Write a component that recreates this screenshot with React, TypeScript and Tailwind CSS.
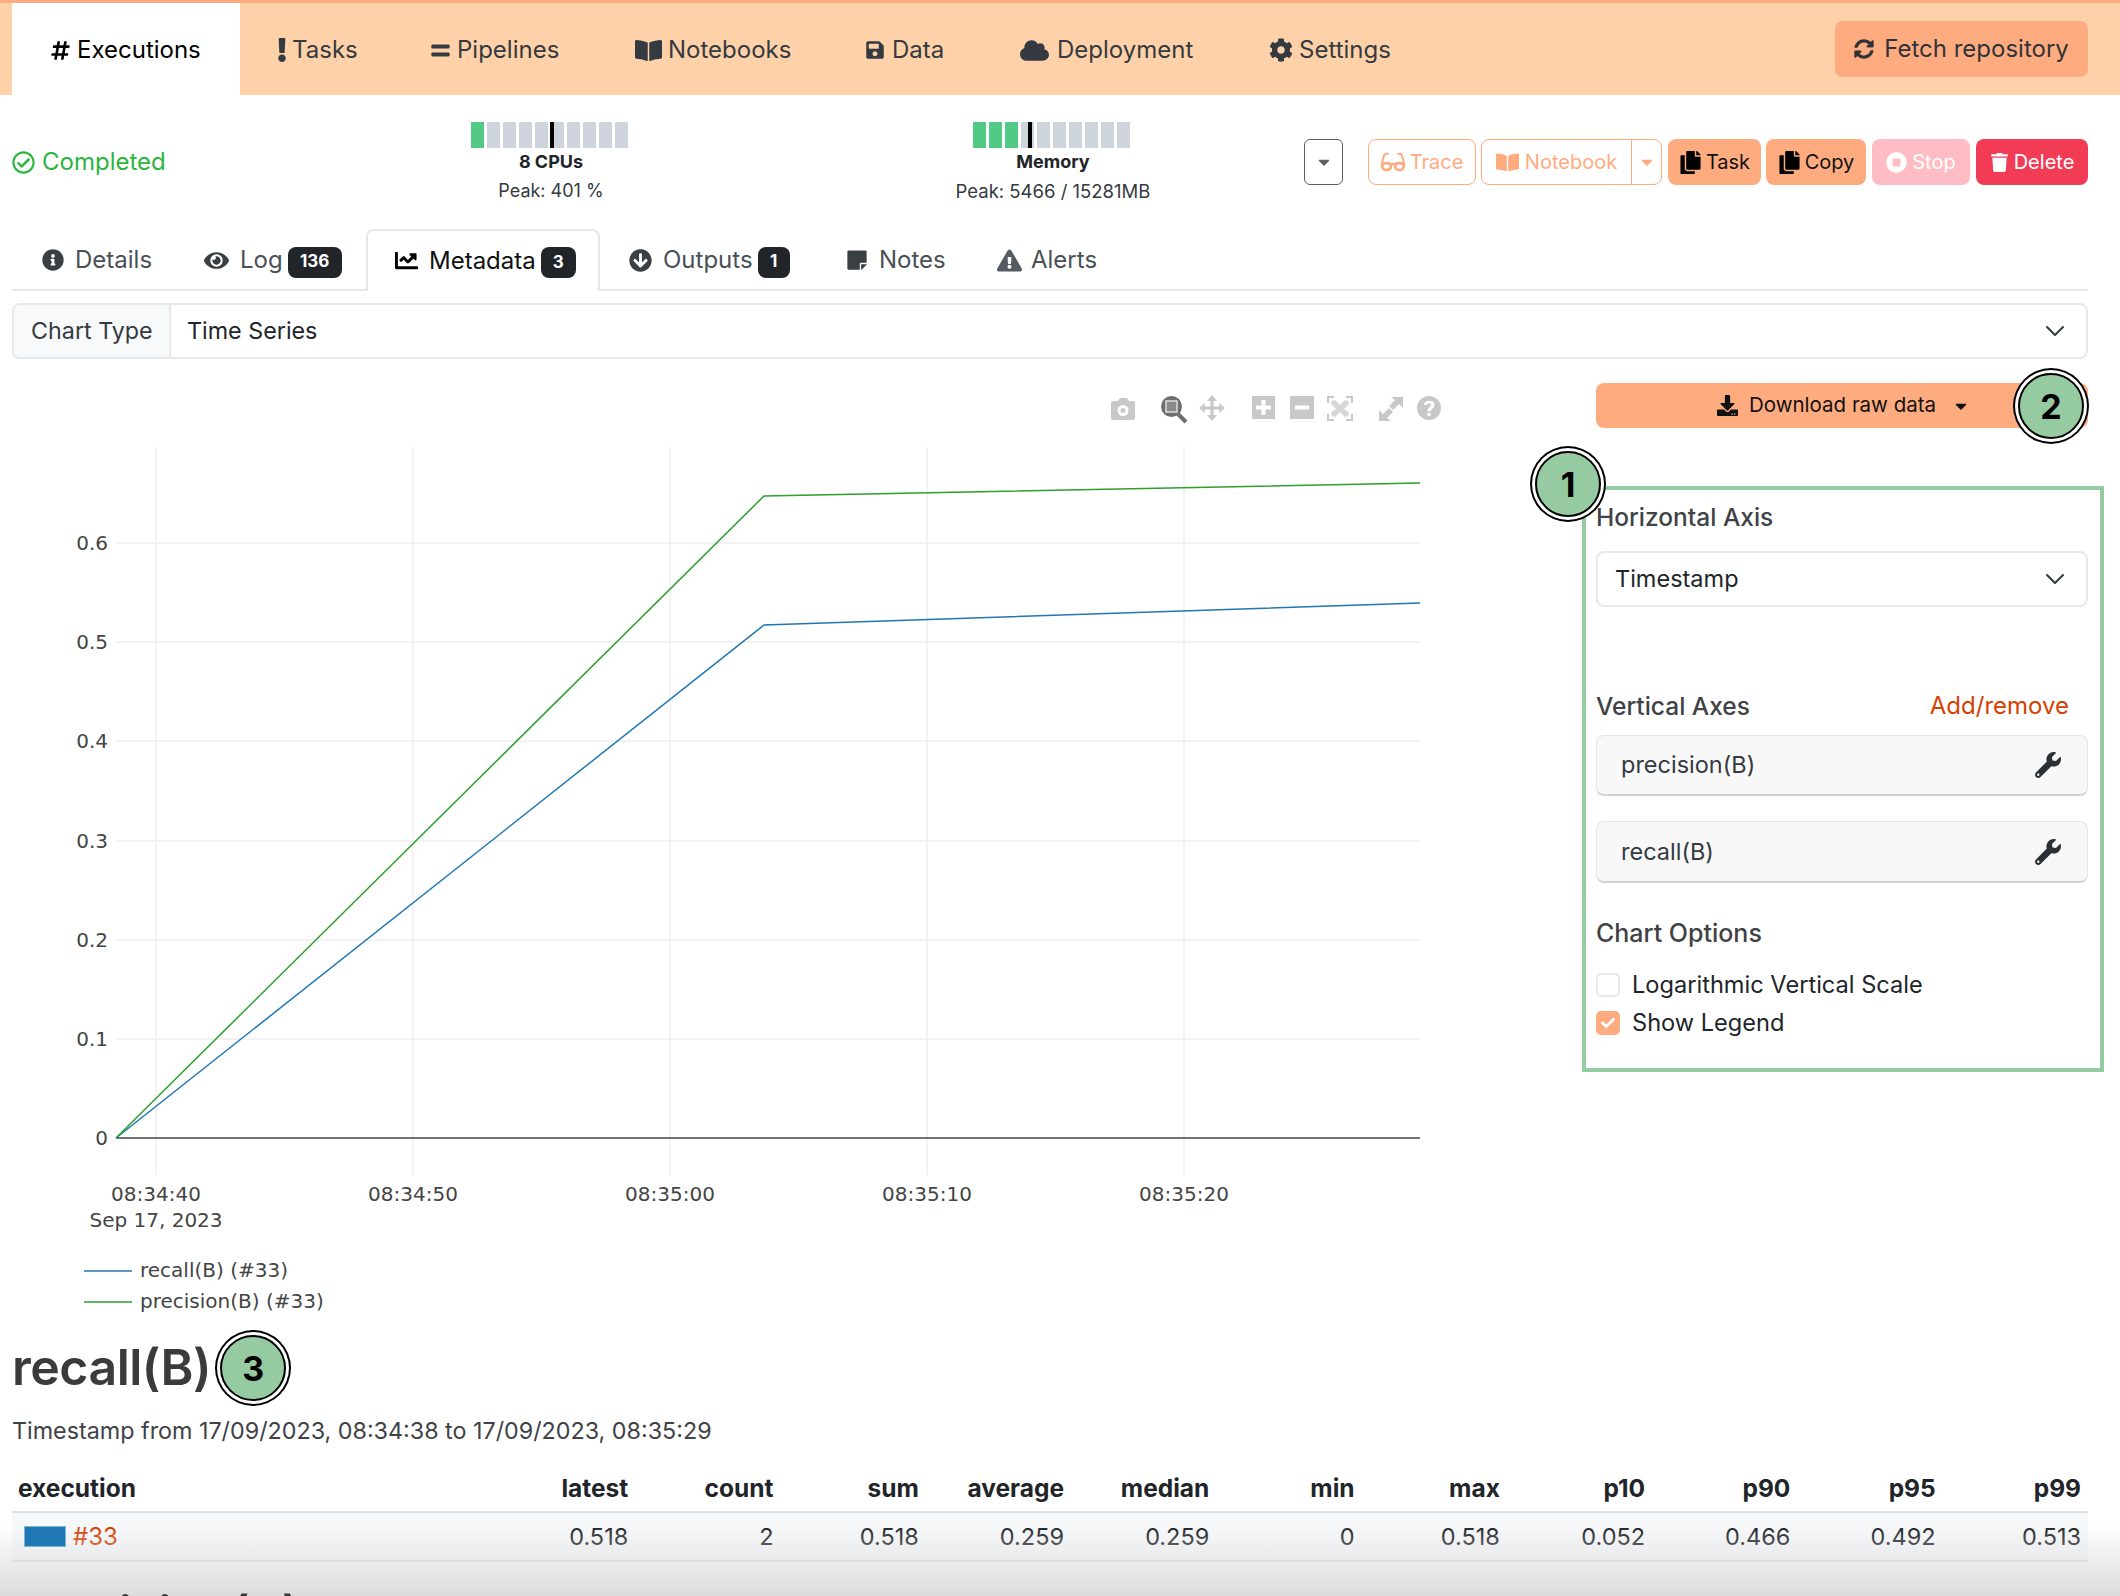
import React from "react";
import {
  FaHashtag, FaExclamation, FaEquals, FaBookOpen, FaSave, FaCloud, FaCog, FaSyncAlt, FaRegCheckCircle,
  FaInfoCircle, FaEye, FaChartLine, FaArrowCircleDown, FaStickyNote, FaExclamationTriangle, FaGlasses,
  FaCopy, FaStopCircle, FaTrash, FaDownload, FaWrench, FaCaretDown, FaCheck,
} from "react-icons/fa";
import { ChevronDown } from "lucide-react";

const navItems = [
  { label: "Tasks", icon: <FaExclamation className="text-[24px] -mr-[2px]" />, w: "w-[152px]", gap: "gap-0", pl: "pl-[30px]" },
  { label: "Pipelines", icon: <FaEquals className="text-[21px]" />, w: "w-[204px]", gap: "gap-[6px]", pl: "pl-[38px]" },
  { label: "Notebooks", icon: <FaBookOpen className="text-[27px]" />, w: "w-[230px]", gap: "gap-[6px]", pl: "pl-[39px]" },
  { label: "Data", icon: <FaSave className="text-[20px]" />, w: "w-[157px]", gap: "gap-[7px]", pl: "pl-[39px]" },
  { label: "Deployment", icon: <FaCloud className="text-[29px]" />, w: "w-[248px]", gap: "gap-[8px]", pl: "pl-[37px]" },
  { label: "Settings", icon: <FaCog className="text-[24px]" />, w: "w-[200px]", gap: "gap-[6px]", pl: "pl-[38px]" },
];

const head = ["latest", "count", "sum", "average", "median", "min", "max", "p10", "p90", "p95", "p99"];
const vals = ["0.518", "2", "0.518", "0.259", "0.259", "0", "0.518", "0.052", "0.466", "0.492", "0.513"];

function Meter({ green, marker }: { green: number; marker: string }) {
  return (
    <div className="relative -ml-[4px] flex gap-[3px] h-[26px]">
      {Array.from({ length: 10 }).map((_, i) => (
        <div key={i} className={i < green ? "w-[13px] bg-[#53c986]" : "w-[13px] bg-[#cdd4dc]"} />
      ))}
      <div className={`absolute top-0 h-full w-[4px] bg-black ${marker}`} />
    </div>
  );
}

function Badge({ n, w }: { n: string; w: string }) {
  return (
    <span className={`-ml-[6px] translate-y-[2px] h-[31px] ${w} rounded-lg bg-[#212529] text-white text-[17px] font-bold flex items-center justify-center`}>{n}</span>
  );
}

function Callout({ n, pos }: { n: string; pos: string }) {
  return (
    <div className={`absolute z-10 w-[66px] h-[66px] rounded-full border-2 border-black bg-[#96cba1] shadow-[0_0_0_3px_#fff,0_0_0_5px_#000] flex items-center justify-center text-[34px] font-bold text-black ${pos}`}>
      {n}
    </div>
  );
}

function MetricBox({ label, mt, h }: { label: string; mt: string; h: string }) {
  return (
    <div className={`${mt} ${h} flex items-center justify-between pl-[24px] pr-[26px] rounded-lg bg-[#f8f8f8] border border-[#e3e5e8] border-b-2 border-b-[#cfd2d6] text-[23.5px] text-[#343a40]`}>
      <span>{label}</span>
      <FaWrench className="text-[26px] text-[#2b3035]" />
    </div>
  );
}

function Chart() {
  const xs = [156, 413, 670, 927, 1184];
  const xl = ["08:34:40", "08:34:50", "08:35:00", "08:35:10", "08:35:20"];
  const ys = [
    [1039, "0.1"], [940, "0.2"], [841, "0.3"], [741, "0.4"], [642, "0.5"], [543, "0.6"],
  ] as [number, string][];
  const t = { fontFamily: "'DejaVu Sans', sans-serif", fontSize: 20, fill: "#444" };
  const ic = "#c8c8c8";
  return (
    <svg viewBox="12 359 1570 961" className="w-[1570px] h-[961px] shrink-0">
      {/* modebar */}
      <g fill={ic}>
        <path fillRule="evenodd" d="M1113 401h5l2-3h7l2 3h4a2 2 0 0 1 2 2v15a2 2 0 0 1-2 2h-20a2 2 0 0 1-2-2v-15a2 2 0 0 1 2-2Zm10 4a5.500 5.500 0 1 0 0 11 5.500 5.500 0 0 0 0-11Zm0 3a2.500 2.500 0 1 1 0 5 2.500 2.500 0 0 1 0-5Z" />
        <path d="M1212 395l5 6h-3.500v5.500h5.500v-3.500l6 5-6 5v-3.500h-5.500v5.500h3.500l-5 6-5-6h3.500v-5.500h-5.500v3.500l-6-5 6-5v3.500h5.500v-5.500h-3.500Z" />
        <path fillRule="evenodd" d="M1252 396h23v23h-23Zm9.500 4v5.500h-5.500v4h5.500v5.500h4v-5.500h5.500v-4h-5.500v-5.500Z" />
        <path fillRule="evenodd" d="M1290 396h24v23h-24Zm5 9.500v4h14v-4Z" />
        <path d="M1327 396h7v2h-5v5h-2Zm19 0h7v7h-2v-5h-5ZM1327 414h2v5h5v2h-7Zm24 0h2v7h-7v-2h5Z" />
        <path d="M1332 401l3-1 5 5 5-5 3 1 1 3-5 4.500 5 4.500-1 3-3 1-5-5-5 5-3-1-1-3 5-4.500-5-4.500Z" opacity="0.75" />
        <path d="M1403 397v11l-4-4-6 6-4-4 6-6-4-3ZM1379 421v-11l4 4 6-6 4 4-6 6 4 3Z" />
        <path fillRule="evenodd" d="M1429 396a12 12 0 1 1 0 24 12 12 0 0 1 0-24Zm-5 9h3c0-2 4-2 4 0 0 1.500-3.500 2.500-3.500 5.500v1h3c0-2.500 4-3 4-7 0-5-10.500-5-10.500.5Zm3.500 8v3h3v-3Z" />
      </g>
      <circle cx="1171.500" cy="406.500" r="10.500" fill="#6f6f6f" />
      <path d="M1178 414l8 8" stroke="#6f6f6f" strokeWidth="4" />
      <rect x="1166" y="401" width="11" height="11" fill="#8a8a8a" stroke="#dddddd" strokeWidth="1.500" />

      {/* grid */}
      {xs.map((x) => (
        <line key={x} x1={x} x2={x} y1={447} y2={1175} stroke="#eeeeee" strokeWidth="1.400" />
      ))}
      {ys.map(([y]) => (
        <line key={y} x1={116} x2={1420} y1={y} y2={y} stroke="#eeeeee" strokeWidth="1.400" />
      ))}
      <line x1={116} x2={1420} y1={1138} y2={1138} stroke="#444" strokeWidth="1.400" />
      <polyline points="116,1138 764,625 1420,603" fill="none" stroke="#1f77b4" strokeWidth="1.500" />
      <polyline points="116,1138 764,496 1420,483" fill="none" stroke="#2ca02c" strokeWidth="1.500" />

      {/* labels */}
      {ys.map(([y, l]) => (
        <text key={l} x={108} y={y + 6.500} textAnchor="end" {...t}>{l}</text>
      ))}
      <text x={108} y={1144.500} textAnchor="end" {...t}>0</text>
      {xs.map((x, i) => (
        <text key={x} x={x} y={1201} textAnchor="middle" {...t}>{xl[i]}</text>
      ))}
      <text x={156} y={1227} textAnchor="middle" {...t}>Sep 17, 2023</text>

      {/* legend */}
      <line x1={84} x2={132} y1={1271} y2={1271} stroke="#1f77b4" strokeWidth="1.500" />
      <text x={140} y={1277} {...t}>recall(B) (#33)</text>
      <line x1={84} x2={132} y1={1302} y2={1302} stroke="#2ca02c" strokeWidth="1.500" />
      <text x={140} y={1308} {...t}>precision(B) (#33)</text>
    </svg>
  );
}

export default function App() {
  return (
    <div className="relative w-[2120px] h-[1596px] overflow-hidden bg-white font-['Inter','Liberation_Sans',sans-serif] text-[#212529]">
      {/* top nav */}
      <nav className="h-[95px] border-t-[3px] border-[#ffab80] bg-[#ffd1a8] pl-3 pr-8 flex items-stretch text-[24px] text-[#343a40]">
        <div className="w-[228px] bg-white pl-[38px] pt-[2px] flex items-center gap-[6px] text-black">
          <FaHashtag className="text-[21px]" />
          <span>Executions</span>
        </div>
        {navItems.map((n) => (
          <div key={n.label} className={`${n.w} ${n.pl} ${n.gap} pt-[2px] flex items-center`}>
            {n.icon}
            <span>{n.label}</span>
          </div>
        ))}
        <div className="ml-auto self-center h-[56px] w-[253px] rounded-lg bg-[#ffab80] flex items-center justify-center gap-[10px] text-[#2f3337]">
          <FaSyncAlt className="text-[20px]" />
          <span>Fetch repository</span>
        </div>
      </nav>

      {/* status row */}
      <div className="h-[134px] pl-3 pr-8 flex items-center">
        <div className="w-[389px] flex items-center gap-[7px] text-[24px] text-[#2bb53d]">
          <FaRegCheckCircle className="text-[23px]" />
          <span>Completed</span>
        </div>
        <div className="w-[300px] flex flex-col items-center">
          <Meter green={1} marker="left-[79px]" />
          <div className="mt-[2px] h-[24px] text-[18px] font-bold leading-[24px]">8 CPUs</div>
          <div className="mt-[5px] h-[24px] text-[18px] leading-[24px] text-[#343a40]">Peak: 401 %</div>
        </div>
        <div className="ml-[202px] w-[300px] flex flex-col items-center">
          <Meter green={3} marker="left-[55px]" />
          <div className="mt-[2px] h-[24px] text-[18px] font-bold leading-[24px]">Memory</div>
          <div className="mt-[5px] h-[24px] text-[18.5px] leading-[24px] text-[#343a40]">Peak: 5466 / 15281MB</div>
        </div>
        <div className="ml-auto flex items-center text-[20px]">
          <div className="w-[39px] h-[46px] rounded-md border border-[#5c6064] flex items-center justify-center text-[#5c6064]">
            <FaCaretDown className="text-[18px]" />
          </div>
          <div className="ml-[25px] w-[108px] h-[46px] rounded-lg border border-[#ffab80] text-[#ffab80] flex items-center justify-center gap-[5px]">
            <FaGlasses className="text-[24px]" /><span>Trace</span>
          </div>
          <div className="ml-[5px] w-[181px] h-[46px] rounded-lg border border-[#ffab80] text-[#ffab80] flex items-center">
            <div className="w-[149px] flex items-center justify-center gap-[6px]">
              <FaBookOpen className="text-[23px]" /><span>Notebook</span>
            </div>
            <div className="flex-1 h-full border-l border-[#ffab80] flex items-center justify-center">
              <FaCaretDown className="text-[18px]" />
            </div>
          </div>
          <div className="ml-[6px] w-[93px] h-[46px] rounded-lg bg-[#ffab80] text-[#111] flex items-center justify-center gap-[4px]">
            <FaCopy className="text-[23px] text-black" /><span>Task</span>
          </div>
          <div className="ml-[5px] w-[100px] h-[46px] rounded-lg bg-[#ffab80] text-[#111] flex items-center justify-center gap-[4px]">
            <FaCopy className="text-[23px] text-black" /><span>Copy</span>
          </div>
          <div className="ml-[6px] w-[98px] h-[46px] rounded-lg bg-[#ffbcc4] text-white flex items-center justify-center gap-[5px]">
            <FaStopCircle className="text-[21px]" /><span>Stop</span>
          </div>
          <div className="ml-[6px] w-[112px] h-[46px] rounded-lg bg-[#f23c56] text-white flex items-center justify-center gap-[5px]">
            <FaTrash className="text-[19px]" /><span>Delete</span>
          </div>
        </div>
      </div>

      <div className="pl-3 pr-8">
        {/* sub tabs */}
        <div className="h-[62px] border-b-2 border-[#e4e6ea] flex text-[24px] text-[#495057]">
          <div className="w-[163px] pl-[30px] flex items-center gap-[11px] pt-[2px]">
            <FaInfoCircle className="text-[22px] text-[#3a3f44]" /><span>Details</span>
          </div>
          <div className="w-[191px] pl-[29px] flex items-center gap-[11px] pt-[2px]">
            <FaEye className="text-[25px] text-[#3a3f44]" /><span>Log</span><Badge n="136" w="w-[54px]" />
          </div>
          <div className="w-[234px] h-[62px] pl-[27px] pb-[1px] flex items-center gap-[11px] bg-white border-2 border-b-0 border-[#e4e6ea] rounded-t-lg text-[#111]">
            <FaChartLine className="text-[23px] text-black" /><span>Metadata</span><Badge n="3" w="w-[35px]" />
          </div>
          <div className="w-[217px] pl-[29px] flex items-center gap-[11px] pt-[2px]">
            <FaArrowCircleDown className="text-[23px] text-[#3a3f44]" /><span>Outputs</span><Badge n="1" w="w-[32px]" />
          </div>
          <div className="w-[151px] pl-[29px] flex items-center gap-[11px] pt-[2px]">
            <FaStickyNote className="text-[22px] text-[#3a3f44]" /><span>Notes</span>
          </div>
          <div className="pl-[29px] flex items-center gap-[9px] pt-[2px]">
            <FaExclamationTriangle className="text-[25px] text-[#555b61]" /><span>Alerts</span>
          </div>
        </div>

        {/* chart type */}
        <div className="mt-[12px] h-[56px] flex rounded-lg border-2 border-[#e6e8ea] text-[23.3px]">
          <div className="w-[157px] pl-[17px] flex items-center bg-[#f8f9fa] border-r-2 border-[#e6e8ea] rounded-l-lg text-[#343a40]">Chart Type</div>
          <div className="flex-1 pl-[16px] pr-[15px] flex items-center justify-between">
            <span>Time Series</span>
            <ChevronDown className="w-[32px] h-[32px] text-[#343a40]" strokeWidth={1.5} />
          </div>
        </div>

        {/* chart + options */}
        <div className="flex">
          <Chart />
          <div className="ml-[14px] w-[492px] shrink-0">
            <div className="relative mt-[24px] h-[45px] rounded-lg bg-[#ffab80] flex items-center text-[20.5px] text-[#111] pl-[121px]">
              <FaDownload className="text-[21px] mr-[11px]" />
              <span>Download raw data</span>
              <FaCaretDown className="text-[18px] ml-[16px]" />
              <Callout n="2" pos="left-[422px] -top-[10px]" />
            </div>
            <div className="relative mt-[58px] -ml-[14px] w-[522px] h-[586px] border-4 border-[#96cba1] pl-[10px] pr-[12px] pt-[11px]">
              <Callout n="1" pos="-left-[51px] -top-[39px]" />
              <div className="h-[32px] flex items-center text-[24.5px] font-medium text-[#3f4246]">Horizontal Axis</div>
              <div className="mt-[18px] h-[56px] rounded-lg border-2 border-[#e6e8ea] pl-[17px] pr-[15px] flex items-center justify-between text-[23.5px]">
                <span>Timestamp</span>
                <ChevronDown className="w-[32px] h-[32px] text-[#343a40]" strokeWidth={1.5} />
              </div>
              <div className="mt-[83px] h-[32px] flex items-center justify-between pr-[19px] text-[24.5px] font-medium text-[#3f4246]">
                <span>Vertical Axes</span>
                <span className="font-normal text-[24px] text-[#d64000]">Add/remove</span>
              </div>
              <MetricBox label="precision(B)" mt="mt-[13px]" h="h-[61px]" />
              <MetricBox label="recall(B)" mt="mt-[25px]" h="h-[62px]" />
              <div className="mt-[35px] h-[32px] flex items-center text-[25px] font-medium text-[#3f4246]">Chart Options</div>
              <div className="mt-[20px] h-[30px] flex items-center gap-[12px] text-[23.6px]">
                <span className="w-[24px] h-[24px] rounded-[5px] border-2 border-[#e6e8ea]" />
                <span>Logarithmic Vertical Scale</span>
              </div>
              <div className="mt-[8px] h-[30px] flex items-center gap-[12px] text-[23.6px]">
                <span className="w-[24px] h-[24px] rounded-[5px] bg-[#ffab80] flex items-center justify-center text-white">
                  <FaCheck className="text-[14px]" />
                </span>
                <span>Show Legend</span>
              </div>
            </div>
          </div>
        </div>

        {/* recall heading */}
        <div className="relative h-[95px] flex items-center text-[50px] font-semibold tracking-[-0.5px] text-[#3b3b3b]">
          <span>recall(B)</span>
          <Callout n="3" pos="left-[208px] top-[15px]" />
        </div>
        <div className="h-[32px] flex items-center text-[23.3px] text-[#3f4246]">Timestamp from 17/09/2023, 08:34:38 to 17/09/2023, 08:35:29</div>

        <table className="mt-[18px] w-full table-fixed border-collapse text-[23.5px]">
          <thead>
            <tr className="h-[47px] border-b-2 border-[#dee2e6] text-[24.5px]">
              <th className="w-[478px] pl-[6px] text-left font-bold">execution</th>
              {head.map((h) => (
                <th key={h} className="pr-[7px] text-right font-bold">{h}</th>
              ))}
            </tr>
          </thead>
          <tbody>
            <tr className="h-[49px] bg-[#f7f8fa] border-b-2 border-[#dee2e6]">
              <td className="pl-[12px]">
                <div className="flex items-center">
                  <span className="relative z-10 w-[42px] h-[21px] bg-[#1f77b4] border border-[#7fb3d8]" />
                  <span className="ml-[7px] text-[24px] text-[#d64000]">#33</span>
                </div>
              </td>
              {vals.map((v, i) => (
                <td key={i} className="pr-[7px] text-right">{v}</td>
              ))}
            </tr>
          </tbody>
        </table>

        <div className="relative z-10 h-[96px] pt-[8px] flex items-center text-[50px] font-semibold tracking-[-0.5px] text-[#3b3b3b]">precision(B)</div>
      </div>

      {/* fade at bottom */}
      <div className="absolute inset-x-0 bottom-0 h-[70px] bg-gradient-to-b from-transparent to-[#dcdcdc] pointer-events-none" />
    </div>
  );
}
